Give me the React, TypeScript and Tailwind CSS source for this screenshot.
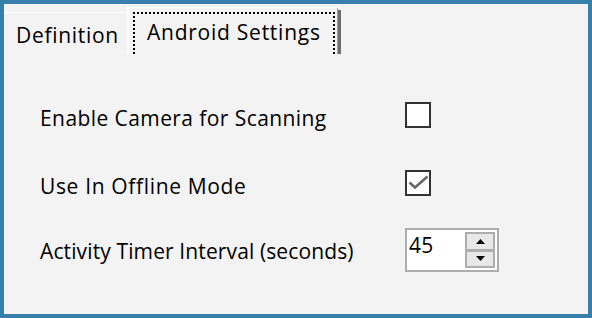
import React from "react";

function Checkbox({ checked }: { checked?: boolean }) {
  return (
    <div className="w-[26px] h-[26px] border-2 border-[#333333] bg-white flex items-center justify-center shrink-0">
      {checked && (
        <svg width="22" height="22" viewBox="0 0 22 22">
          <path d="M2.5 10.5 L8 15.5 L20.5 4.5" fill="none" stroke="#666666" strokeWidth="2.6" />
        </svg>
      )}
    </div>
  );
}

function Spinner() {
  return (
    <div className="w-[94px] h-[44px] border-2 border-[#adadad] bg-white flex shrink-0">
      <div className="pl-[2px] pt-[1px] leading-[28px] text-[21px] tracking-[0.3px] text-black">45</div>
      <div className="ml-auto w-[30px] my-[2px] mr-[2px] bg-[#adadad] p-[2px] flex flex-col gap-[3px]">
        <div className="flex-1 bg-[#e8e8e8] flex items-center justify-center">
          <svg width="9" height="5" viewBox="0 0 9 5">
            <path d="M4.5 0 L9 5 L0 5 Z" fill="#000" />
          </svg>
        </div>
        <div className="flex-1 bg-[#e8e8e8] flex items-center justify-center">
          <svg width="9" height="5" viewBox="0 0 9 5">
            <path d="M0 0 L9 0 L4.5 5 Z" fill="#000" />
          </svg>
        </div>
      </div>
    </div>
  );
}

export default function App() {
  return (
    <div
      className="w-[592px] h-[318px] bg-[#3780ab] p-[4px] text-black"
      style={{ fontFamily: '"Open Sans", "Noto Sans", sans-serif' }}
    >
      <div className="h-full bg-[#f3f3f3] flex flex-col">
        {/* Tab strip */}
        <div className="h-[50px] flex items-end">
          <div className="w-[123px] h-[42px] border-t border-white pt-[8px] pl-[12px] text-[21px] leading-[28px] tracking-[0.7px] whitespace-nowrap">
            Definition
          </div>
          <div className="h-[47px] flex border-t border-l-2 border-white">
            <div className="ml-[4px] mt-[4px] w-[202px] h-[42px] border-t-2 border-l-2 border-r-2 border-dotted border-black pl-[12px] pt-[4px] text-[21px] leading-[28px] tracking-[0.75px] whitespace-nowrap overflow-hidden">
              Android Settings
            </div>
            <div className="ml-[2px] w-px bg-[#a0a0a0]" />
            <div className="mt-[2px] w-[3px] bg-[#6d6d6d]" />
          </div>
        </div>
        {/* Content */}
        <div className="pl-[36px] flex flex-col text-[21px] leading-[28px]">
          <div className="mt-[48px] h-[26px] flex items-start">
            <div className="w-[365px] mt-[2px] whitespace-nowrap tracking-[0.42px]">Enable Camera for Scanning</div>
            <Checkbox />
          </div>
          <div className="mt-[42px] h-[26px] flex items-start">
            <div className="w-[365px] mt-[2px] whitespace-nowrap tracking-[0.65px]">Use In Offline Mode</div>
            <Checkbox checked />
          </div>
          <div className="mt-[32px] h-[44px] flex items-start">
            <div className="w-[365px] mt-[9px] whitespace-nowrap tracking-[0.12px]">Activity Timer Interval (seconds)</div>
            <Spinner />
          </div>
        </div>
      </div>
    </div>
  );
}
